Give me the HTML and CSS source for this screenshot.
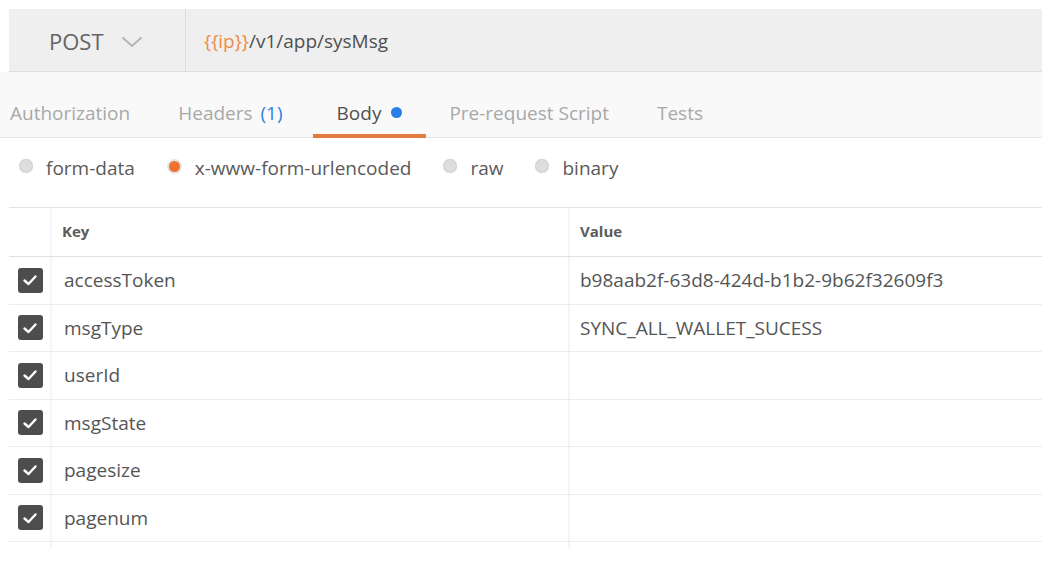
FILE: index.html
```html
<!DOCTYPE html>
<html>
<head>
<meta charset="utf-8">
<link rel="stylesheet" href="styles.css">
</head>
<body>
<div class="page">
  <div class="urlbar">
    <div class="method">
      <span class="method-name">POST</span>
      <svg class="chev" width="22" height="12" viewBox="0 0 22 12"><path d="M1.5 1.5 L11 10 L20.5 1.5" fill="none" stroke="#b4b4b4" stroke-width="2"/></svg>
    </div>
    <div class="url"><span class="var">{{ip}}</span>/v1/app/sysMsg</div>
  </div>
  <div class="tabs">
    <div class="tab">Authorization</div>
    <div class="tab">Headers <span class="count">(1)</span></div>
    <div class="tab active">Body <span class="dot"></span></div>
    <div class="tab">Pre-request Script</div>
    <div class="tab">Tests</div>
  </div>
  <div class="radios">
    <label class="radio"><span class="circle"></span>form-data</label>
    <label class="radio on"><span class="circle"></span>x-www-form-urlencoded</label>
    <label class="radio"><span class="circle"></span>raw</label>
    <label class="radio"><span class="circle"></span>binary</label>
  </div>
  <div class="table">
    <div class="row head">
      <div class="c chk"></div>
      <div class="c key">Key</div>
      <div class="c val">Value</div>
    </div>
    <div class="row">
      <div class="c chk"><span class="box"><svg viewBox="0 0 24 24" width="24" height="24"><path d="M6.5 12.5 L10.5 16 L17.5 8.5" fill="none" stroke="#fff" stroke-width="2.4" stroke-linecap="round" stroke-linejoin="round"/></svg></span></div>
      <div class="c key">accessToken</div>
      <div class="c val">b98aab2f-63d8-424d-b1b2-9b62f32609f3</div>
    </div>
    <div class="row">
      <div class="c chk"><span class="box"><svg viewBox="0 0 24 24" width="24" height="24"><path d="M6.5 12.5 L10.5 16 L17.5 8.5" fill="none" stroke="#fff" stroke-width="2.4" stroke-linecap="round" stroke-linejoin="round"/></svg></span></div>
      <div class="c key">msgType</div>
      <div class="c val">SYNC_ALL_WALLET_SUCESS</div>
    </div>
    <div class="row">
      <div class="c chk"><span class="box"><svg viewBox="0 0 24 24" width="24" height="24"><path d="M6.5 12.5 L10.5 16 L17.5 8.5" fill="none" stroke="#fff" stroke-width="2.4" stroke-linecap="round" stroke-linejoin="round"/></svg></span></div>
      <div class="c key">userId</div>
      <div class="c val"></div>
    </div>
    <div class="row">
      <div class="c chk"><span class="box"><svg viewBox="0 0 24 24" width="24" height="24"><path d="M6.5 12.5 L10.5 16 L17.5 8.5" fill="none" stroke="#fff" stroke-width="2.4" stroke-linecap="round" stroke-linejoin="round"/></svg></span></div>
      <div class="c key">msgState</div>
      <div class="c val"></div>
    </div>
    <div class="row">
      <div class="c chk"><span class="box"><svg viewBox="0 0 24 24" width="24" height="24"><path d="M6.5 12.5 L10.5 16 L17.5 8.5" fill="none" stroke="#fff" stroke-width="2.4" stroke-linecap="round" stroke-linejoin="round"/></svg></span></div>
      <div class="c key">pagesize</div>
      <div class="c val"></div>
    </div>
    <div class="row">
      <div class="c chk"><span class="box"><svg viewBox="0 0 24 24" width="24" height="24"><path d="M6.5 12.5 L10.5 16 L17.5 8.5" fill="none" stroke="#fff" stroke-width="2.4" stroke-linecap="round" stroke-linejoin="round"/></svg></span></div>
      <div class="c key">pagenum</div>
      <div class="c val"></div>
    </div>
    <div class="row tail">
      <div class="c chk"></div>
      <div class="c key"></div>
      <div class="c val"></div>
    </div>
  </div>
</div>
</body>
</html>
```
FILE: styles.css
```css
html, body {
  margin: 0;
  padding: 0;
  background: #ffffff;
}
body {
  font-family: "Open Sans", "Noto Sans", sans-serif;
  color: #505050;
  width: 1042px;
  height: 564px;
  overflow: hidden;
}
.page {
  padding-top: 9px;
}
.urlbar {
  margin-left: 9px;
  height: 62px;
  background: #efefef;
  border-bottom: 1px solid #dedede;
  display: flex;
  align-items: stretch;
}
.method {
  width: 136px;
  padding-left: 40px;
  padding-top: 2px;
  border-right: 1px solid #dcdcdc;
  display: flex;
  align-items: center;
  gap: 17px;
}
.method-name {
  font-size: 22px;
  color: #646464;
}
.chev {
  margin-top: 1px;
}
.url {
  display: flex;
  align-items: center;
  padding-left: 18px;
  padding-top: 2px;
  font-size: 19px;
  color: #505050;
}
.var {
  color: #ef8a45;
}
.tabs {
  height: 65px;
  background: #f9f9f9;
  border-bottom: 1px solid #e3e3e3;
  display: flex;
  align-items: stretch;
  margin-left: -14px;
}
.tab {
  padding: 19px 24px 0;
  display: flex;
  align-items: center;
  gap: 3px;
  font-size: 19px;
  color: #a8a8a8;
  border-bottom: 4px solid transparent;
  margin-bottom: -1px;
  white-space: pre;
}
.tab.active {
  color: #505050;
  border-bottom-color: #e37b3e;
  margin-left: 6px;
  margin-right: -1px;
  gap: 2px;
}
.count {
  color: #2e7fe0;
}
.dot {
  width: 11px;
  height: 11px;
  border-radius: 50%;
  background: #2a7de8;
  margin-left: 3px;
}
.radios {
  height: 69px;
  display: flex;
  align-items: center;
  padding-left: 19px;
  padding-bottom: 9px;
  box-sizing: border-box;
  font-size: 19px;
  color: #5a5a5a;
}
.radio {
  display: flex;
  align-items: center;
  margin-right: 32px;
}
.circle {
  width: 14px;
  height: 14px;
  border-radius: 50%;
  background: #dddddd;
  box-shadow: inset 0 0 0 1px #d2d2d2;
  margin-right: 13px;
  margin-top: -4px;
}
.radio.on .circle {
  width: 11px;
  height: 11px;
  background: #ef7330;
  border: 2px solid #e4e4e4;
  box-shadow: none;
  margin-right: 13px;
}
.table {
  margin-left: 9px;
  border-top: 1px solid #e4e4e4;
}
.row {
  display: grid;
  grid-template-columns: 41px 518px 1fr;
  height: 46.5px;
  border-bottom: 1px solid #ededed;
}
.row.head {
  height: 48px;
  border-bottom-color: #e0e0e0;
}
.row.tail {
  height: 7px;
  border-bottom: none;
}
.c {
  display: flex;
  align-items: center;
}
.c.key, .c.val {
  border-left: 2px solid #f5f5f5;
  font-size: 19px;
  color: #555555;
}
.c.key {
  padding-left: 12px;
}
.c.val {
  padding-left: 10px;
}
.row.head .c.key, .row.head .c.val {
  font-size: 15px;
  font-weight: 700;
  color: #5c5c5c;
  padding-bottom: 2px;
}
.row.head .c.key {
  padding-left: 10px;
}
.chk {
  justify-content: center;
  padding-left: 1px;
}
.box {
  width: 25px;
  height: 25px;
  border-radius: 3px;
  background: #4d4d4d;
  display: flex;
  align-items: center;
  justify-content: center;
}
.box svg {
  display: block;
}
```
